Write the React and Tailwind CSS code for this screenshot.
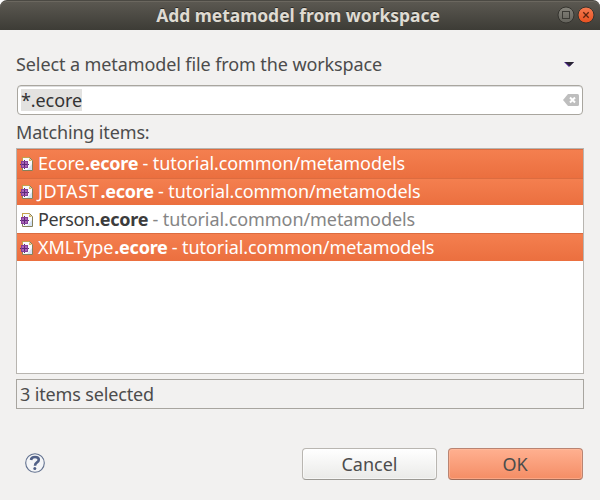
const ROWS = [
  { name: 'Ecore', selected: true, nameCls: 'w-[47px] tracking-[0px]', height: 'h-[29px]' },
  { name: 'JDTAST', selected: true, nameCls: 'w-[62.5px] tracking-[0.6px]', height: 'h-[27px]' },
  { name: 'Person', selected: false, nameCls: 'w-[57px] tracking-[-0.4px]', height: 'h-7' },
  { name: 'XMLType', selected: true, nameCls: 'w-[76.3px] tracking-[-0.1px]', height: 'h-7' },
];

function FileIcon() {
  return (
    <svg width="14" height="14" viewBox="0 0 14 14" className="shrink-0">
      <path d="M2.5 .5H9.5L12.5 3.5V13.5H2.5Z" fill="#f7f9fd" stroke="#85805a" />
      <path d="M7 13L12 7V13Z" fill="#d5e2f5" />
      <path d="M2.5 4V.5H9" fill="none" stroke="#c7a24a" />
      <path d="M9 1V4H12Z" fill="#e0b95c" />
      <rect x="1" y="4" width="7" height="7" fill="#a964ba" />
      <path d="M0 7H9V8H0ZM4 3H5V12H4Z" fill="#5c2a78" />
      <path d="M1 4H8V5H1ZM1 10H8V11H1ZM1 5H2V10H1ZM7 5H8V10H7Z" fill="#843f98" />
    </svg>
  );
}

function Row({ row }) {
  const tone = row.selected
    ? 'bg-linear-to-b from-[#f47f4f] to-[#eb6f3f] text-white border-t border-[#dc6c40]'
    : 'bg-white text-[#3c3c3c] border-t border-white';
  return (
    <div className={`flex items-center pl-[3px] ${row.height} ${tone}`}>
      <FileIcon />
      <div className="mb-[2px] ml-1 flex">
        <span className={row.nameCls}>{row.name}</span>
        <span className="w-[57.5px] font-bold tracking-[-0.25px]">.ecore</span>
        <span className={`tracking-[-0.08px] ${row.selected ? '' : 'text-[#858585]'}`}>- tutorial.common/metamodels</span>
      </div>
    </div>
  );
}

export default function App() {
  return (
    <div className="flex h-[500px] w-[600px] flex-col bg-white font-['Noto_Sans',sans-serif] text-[18px] leading-[24px] whitespace-nowrap text-[#4c4c4c]">
      <header className="relative flex h-[30px] shrink-0 items-center justify-center rounded-t-[7px] border-t border-[#4b4943] bg-linear-to-b from-[#5c5952] to-[#3d3c36] shadow-[inset_0_1px_0_#6b675f]">
        <h1 className="mb-px ml-[-4px] text-[17.5px] font-bold tracking-[-0.04px] text-[#dfdbd2] [text-shadow:0_-1px_0_#2d2c28]">Add metamodel from workspace</h1>
        <svg className="absolute top-[4px] right-[4px]" width="40" height="20" viewBox="0 0 40 20">
          <defs>
            <linearGradient id="max" x2="0" y2="1"><stop stopColor="#85837b" /><stop offset="1" stopColor="#62615a" /></linearGradient>
            <linearGradient id="close" x2="0" y2="1"><stop stopColor="#f47b51" /><stop offset="1" stopColor="#e8501f" /></linearGradient>
          </defs>
          <circle cx="10" cy="10" r="8" fill="url(#max)" stroke="#34332e" />
          <rect x="6.5" y="6.5" width="7" height="7" fill="none" stroke="#3b3a35" />
          <circle cx="30" cy="10" r="8" fill="url(#close)" stroke="#34332e" />
          <path d="M27.3 7.3L32.7 12.7M32.7 7.3L27.3 12.7" stroke="#5b2410" strokeWidth="1.3" />
        </svg>
      </header>
      <main className="flex flex-1 flex-col bg-[#f2f1f0] px-4 pt-[22px]">
        <div className="flex h-6 items-center justify-between">
          <span className="tracking-[-0.1px]">Select a metamodel file from the workspace</span>
          <svg className="mr-[10px]" width="10" height="5" viewBox="0 0 10 5"><path d="M0 0H10L5 5Z" fill="#4b218b" /><path d="M1 0H10L6 4Z" fill="#292631" /></svg>
        </div>
        <div className="mt-[9px] ml-px flex h-[30px] w-[566px] items-center justify-between rounded-[4px] border border-[#a9a69f] bg-white pr-[3px] pl-[3px] shadow-[inset_0_1px_0_#ddd]">
          <span className="h-[22px] w-[61px] bg-[#e3e2e0] leading-[22px] tracking-[-0.1px] text-[#333]">*.ecore</span>
          <svg width="16" height="12" viewBox="0 0 16 12"><path d="M0 6L5 0H14.5Q16 0 16 1.5V10.5Q16 12 14.5 12H5Z" fill="#bebebe" /><path d="M7 3.5L12 8.5M12 3.5L7 8.5" stroke="#fff" strokeWidth="2" /></svg>
        </div>
        <div className="mt-[5px] h-6 tracking-[-0.15px]">Matching items:</div>
        <div className="mt-[4px] h-[226px] border border-[#b8b5b0] bg-white">
          {ROWS.map((row) => <Row key={row.name} row={row} />)}
        </div>
        <div className="mt-[5px] flex h-[30px] items-center border border-[#a8a59f] pl-[3px] tracking-[-0.15px]">3 items selected</div>
        <footer className="mt-[39px] flex h-8 items-center">
          <svg className="mb-[2px] ml-[9px]" width="20" height="20" viewBox="0 0 20 20">
            <circle cx="10" cy="10" r="9.3" fill="#f4f5f7" stroke="#62718f" strokeWidth="1.1" />
            <path d="M6 7Q6.3 4 10 4Q13.8 4 13.8 6.8Q13.8 8.3 12 9.4Q10 10.7 10 12.8" fill="none" stroke="#506087" strokeWidth="2.6" />
            <circle cx="9.8" cy="15.6" r="1.5" fill="#506087" />
          </svg>
          <button className="ml-auto h-8 w-[135px] rounded-[4px] border border-[#b9b6b1] border-b-[#9b9994] bg-linear-to-b from-white to-[#eaeae8] shadow-[inset_0_0_0_1px_#fff8]">Cancel</button>
          <button className="mr-px ml-[11px] h-8 w-[135px] rounded-[4px] border border-[#b98472] border-b-[#a06b58] bg-linear-to-b from-[#ffb090] to-[#f48d65] pr-px shadow-[inset_0_0_0_1px_#ffc0a480]">OK</button>
        </footer>
      </main>
    </div>
  );
}
